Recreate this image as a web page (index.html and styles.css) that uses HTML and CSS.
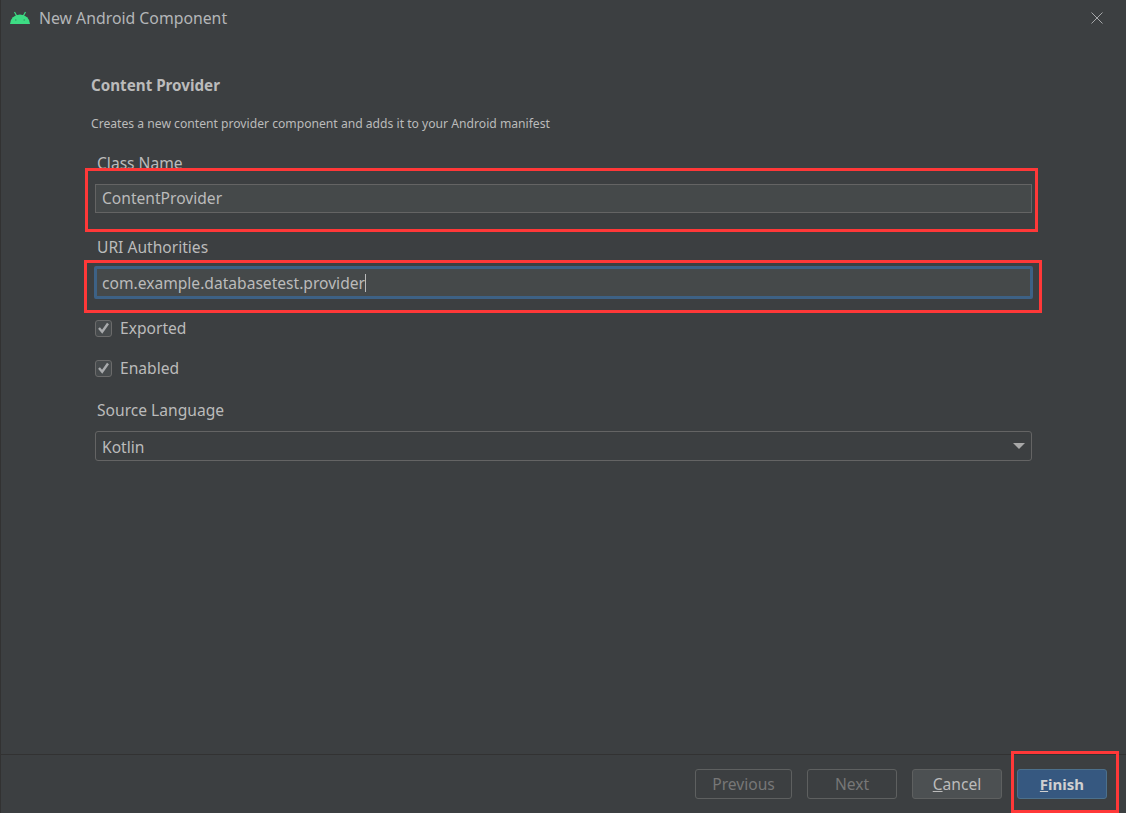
FILE: index.html
```html
<!DOCTYPE html>
<html lang="en">
<head>
  <meta charset="UTF-8">
  <meta name="viewport" content="width=device-width, initial-scale=1.0">
  <title>New Android Component</title>
  <link rel="stylesheet" href="styles.css">
</head>
<body>
<div class="dialog">
  <!-- Title bar -->
  <div class="titlebar">
    <svg class="android-logo" width="20" height="14" viewBox="0 0 20 14">
      <path d="M0 13a10 9.500 0 0 1 20 0z" fill="#3ddc84"/>
      <path d="M4.500 1l2.400 4.200M15.500 1l-2.400 4.200" stroke="#3ddc84" stroke-width="1.200" fill="none"/>
      <circle cx="5.800" cy="9" r=".8" fill="#2f9c64"/>
      <circle cx="14.200" cy="9" r=".8" fill="#2f9c64"/>
    </svg>
    <span class="title">New Android Component</span>
    <svg class="close" width="12" height="12" viewBox="0 0 12 12">
      <path d="M.5.500l11 11M11.500.500l-11 11" stroke="#a5a7a9" stroke-width="1" fill="none"/>
    </svg>
  </div>

  <!-- Form -->
  <div class="content">
    <h3>Content Provider</h3>
    <p class="desc">Creates a new content provider component and adds it to your Android manifest</p>

    <div class="form">
      <label class="field-label label-class">Class Name</label>
      <div class="input input-class">ContentProvider</div>

      <label class="field-label label-uri">URI Authorities</label>
      <div class="input input-focus">com.example.databasetest.provider<span class="caret"></span></div>

      <div class="check check-exported">
        <span class="box"><svg width="13" height="12" viewBox="0 0 13 12"><path d="M2 6l3.200 3.800L11 1.500" stroke="#a9abad" stroke-width="2.400" fill="none"/></svg></span>
        Exported
      </div>
      <div class="check check-enabled">
        <span class="box"><svg width="13" height="12" viewBox="0 0 13 12"><path d="M2 6l3.200 3.800L11 1.500" stroke="#a9abad" stroke-width="2.400" fill="none"/></svg></span>
        Enabled
      </div>

      <label class="field-label label-lang">Source Language</label>
      <div class="select">
        <span>Kotlin</span>
        <span class="arrow"></span>
      </div>
    </div>
  </div>

  <!-- Buttons -->
  <div class="footer">
    <button class="btn disabled">Previous</button>
    <button class="btn disabled">Next</button>
    <button class="btn"><u>C</u>ancel</button>
    <button class="btn primary"><u>F</u>inish</button>
  </div>

  <!-- Red annotation boxes -->
  <div class="mark mark-class"></div>
  <div class="mark mark-uri"></div>
  <div class="mark mark-finish"></div>
</div>
</body>
</html>
```

FILE: styles.css
```css
/* Dark IDE dialog */
html, body {
  margin: 0;
  padding: 0;
  height: 100%;
}
body {
  font-family: "Noto Sans", "Open Sans", Arial, sans-serif;
  font-size: 15.6px;
  color: #bbbbbb;
  background-color: #3c3f41;
  overflow: hidden;
}
.dialog {
  position: relative;
  display: flex;
  flex-direction: column;
  height: 813px;
  box-sizing: border-box;
  border-left: 1px solid #323232;
}
.titlebar {
  display: flex;
  align-items: center;
  height: 36px;
  flex-shrink: 0;
  padding: 0 23px 0 9px;
}
.android-logo {
  margin-right: 9px;
}
.title {
  flex: 1;
  font-size: 15.8px;
  color: #b4b6b8;
}
.content {
  flex: 1;
  padding: 39px 94px 0 90px;
}
h3 {
  margin: 0;
  font-size: 15.2px;
  line-height: 20px;
  font-weight: bold;
  color: #bbbbbb;
}
.desc {
  margin: 20px 0 0;
  font-size: 12.15px;
  line-height: 17px;
  color: #bbbbbb;
}
.form {
  padding-left: 4px;
}
.field-label {
  display: block;
  padding-left: 2px;
  line-height: 20px;
}
.label-class {
  margin-top: 21px;
}
.label-uri {
  margin-top: 24px;
}
.label-lang {
  margin-top: 22px;
}
.input {
  display: flex;
  align-items: center;
  height: 29px;
  margin-top: 11px;
  padding: 0 0 2px 6px;
  box-sizing: border-box;
  background-color: #45494a;
  border: 1px solid #646464;
}
.input-focus {
  height: 33px;
  margin: 9px -1px 0;
  padding: 0 0 0 5px;
  border: 3px solid #3d6185;
  border-radius: 2px;
}
.caret {
  display: inline-block;
  width: 1px;
  height: 18px;
  background-color: #bbbbbb;
}
.check {
  display: flex;
  align-items: center;
  gap: 8px;
  height: 20px;
}
.check-exported {
  margin-top: 19px;
}
.check-enabled {
  margin-top: 20px;
}
.box {
  display: flex;
  align-items: center;
  justify-content: center;
  width: 15px;
  height: 15px;
  background-color: #474b4d;
  border: 1px solid #6b6b6b;
  border-radius: 3px;
}
.select {
  display: flex;
  align-items: center;
  justify-content: space-between;
  height: 30px;
  margin-top: 11px;
  padding: 2px 6px 0;
  box-sizing: border-box;
  border: 1px solid #646464;
  border-radius: 3px;
}
.arrow {
  width: 0;
  height: 0;
  margin: -2px 0 0;
  border-left: 6px solid transparent;
  border-right: 6px solid transparent;
  border-top: 6px solid #a8a8a8;
}
.footer {
  display: flex;
  justify-content: flex-end;
  gap: 15px;
  height: 59px;
  flex-shrink: 0;
  box-sizing: border-box;
  padding: 14px 19px 0 0;
  border-top: 1px solid #323232;
}
.btn {
  width: 90px;
  height: 30px;
  padding: 0;
  font-family: inherit;
  font-size: 15.6px;
  color: #bbbbbb;
  background-color: #4c5052;
  border: 1px solid #5e6060;
  border-radius: 3px;
}
.btn.disabled {
  background: none;
  color: #777777;
  border-color: #5e6060;
}
.btn.disabled:first-child {
  width: 97px;
}
.btn.primary {
  background-color: #365880;
  border-color: #4c708c;
  color: #d0d0d0;
  font-size: 15px;
  font-weight: bold;
}
/* red boxes drawn over the screenshot */
.mark {
  position: absolute;
  box-sizing: border-box;
  border: 3px solid #ff3838;
}
.mark-class {
  left: 84px;
  top: 168px;
  width: 953px;
  height: 64px;
}
.mark-uri {
  left: 83px;
  top: 260px;
  width: 958px;
  height: 53px;
}
.mark-finish {
  left: 1010px;
  top: 751px;
  width: 108px;
  height: 62px;
}
```
